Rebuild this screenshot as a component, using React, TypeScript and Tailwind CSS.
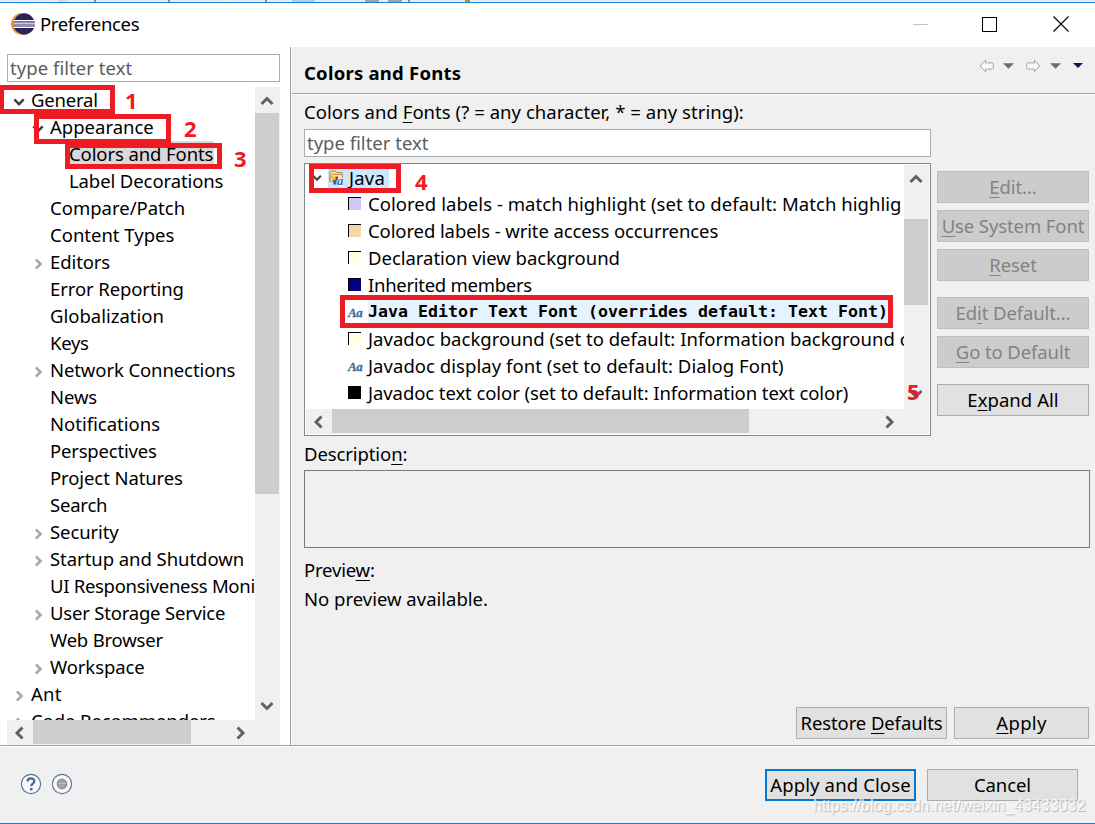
import React from 'react';

interface TreeItem {
    label: string;
    level: number;
    state?: 'open' | 'closed';
    selected?: boolean;
    tracking?: string;
}

interface FontItem {
    label: string;
    swatch?: string;
    selected?: boolean;
    tracking?: string;
}

const pages: TreeItem[] = [
    { label: 'General', level: 0, state: 'open', tracking: 'tracking-[-0.2px]' },
    { label: 'Appearance', level: 1, state: 'open', tracking: 'tracking-normal' },
    { label: 'Colors and Fonts', level: 2, selected: true },
    { label: 'Label Decorations', level: 2 },
    { label: 'Compare/Patch', level: 1, tracking: 'tracking-normal' },
    { label: 'Content Types', level: 1, tracking: 'tracking-normal' },
    { label: 'Editors', level: 1, state: 'closed' },
    { label: 'Error Reporting', level: 1 },
    { label: 'Globalization', level: 1, tracking: 'tracking-normal' },
    { label: 'Keys', level: 1, tracking: 'tracking-[-0.3px]' },
    { label: 'Network Connections', level: 1, state: 'closed' },
    { label: 'News', level: 1 },
    { label: 'Notifications', level: 1, tracking: 'tracking-normal' },
    { label: 'Perspectives', level: 1, tracking: 'tracking-[-0.2px]' },
    { label: 'Project Natures', level: 1 },
    { label: 'Search', level: 1, tracking: 'tracking-[-0.2px]' },
    { label: 'Security', level: 1, state: 'closed' },
    { label: 'Startup and Shutdown', level: 1, state: 'closed', tracking: 'tracking-[-0.05px]' },
    { label: 'UI Responsiveness Monitoring', level: 1, tracking: 'tracking-[-0.3px]' },
    { label: 'User Storage Service', level: 1, state: 'closed', tracking: 'tracking-[-0.2px]' },
    { label: 'Web Browser', level: 1, tracking: 'tracking-[-0.2px]' },
    { label: 'Workspace', level: 1, state: 'closed' },
    { label: 'Ant', level: 0, state: 'closed', tracking: 'tracking-[0.3px]' },
    { label: 'Code Recommenders', level: 0, state: 'closed' },
];

const fonts: FontItem[] = [
    {
        label: 'Colored labels - match highlight (set to default: Match highlig',
        swatch: 'bg-[#cdc8f5]',
        tracking: 'tracking-[0.05px]',
    },
    { label: 'Colored labels - write access occurrences', swatch: 'bg-[#f0d8a8]' },
    { label: 'Declaration view background', swatch: 'bg-[#ffffe1]', tracking: 'tracking-[-0.03px]' },
    { label: 'Inherited members', swatch: 'bg-[#000080]', tracking: 'tracking-[-0.28px]' },
    { label: 'Java Editor Text Font (overrides default: Text Font)', selected: true },
    {
        label: 'Javadoc background (set to default: Information background color)',
        swatch: 'bg-[#ffffe1]',
        tracking: 'tracking-[0.03px]',
    },
    { label: 'Javadoc display font (set to default: Dialog Font)', tracking: 'tracking-[0.05px]' },
    {
        label: 'Javadoc text color (set to default: Information text color)',
        swatch: 'bg-black',
        tracking: 'tracking-[-0.08px]',
    },
];

const indents = ['pl-[5px]', 'pl-[24px]', 'pl-[43px]'];

function Chevron({ dir, className }: { dir: 'up' | 'down' | 'left' | 'right'; className?: string }) {
    const paths = {
        up: 'M1.5 9 L7 3.5 L12.5 9',
        down: 'M1.5 4 L7 9.5 L12.5 4',
        left: 'M9.5 1.5 L4 7 L9.5 12.5',
        right: 'M4.5 1.5 L10 7 L4.5 12.5',
    };
    return (
        <svg viewBox="0 0 14 14" className={className ?? 'w-3.5 h-3.5 text-[#606060]'}>
            <path d={paths[dir]} fill="none" stroke="currentColor" strokeWidth="2.9" />
        </svg>
    );
}

function EclipseLogo() {
    return (
        <svg viewBox="0 0 24 22" className="w-6 h-[22px]">
            <circle cx="11" cy="11" r="11" fill="#f7941e" />
            <circle cx="13" cy="11" r="11" fill="#fff" />
            <circle cx="13" cy="11" r="10.7" fill="#2c2255" />
            <path d="M3 7.6h20.4M2.4 10.9h21.4M3 14.2h20.4" stroke="#fff" strokeWidth="1.4" />
            <path d="M3 9.2h20M3 12.6h20" stroke="#8f8bb5" strokeWidth="1.6" />
        </svg>
    );
}

function FolderIcon() {
    return (
        <svg viewBox="0 0 16 16" className="w-4 h-4">
            <path d="M.8 11.5V2L1.8 1h4.4l1.3 1.5H13V5" fill="#f3d79b" stroke="#b98b3c" />
            <path d="M.8 11.5L3 4.5h10.5v7z" fill="#fae6b4" stroke="#c49a50" />
            <rect x="3.2" y="6.5" width="3.4" height="4" fill="#e8c000" />
            <rect x="6.6" y="6.5" width="2.4" height="4" fill="#a8322c" />
            <rect x="4.2" y="10" width="4.2" height="4.5" fill="#3b5fa5" />
            <text x="8" y="15" fontSize="13" fontWeight="bold" fontStyle="italic" fill="#2f6da6" stroke="#fff" strokeWidth="1.5" paintOrder="stroke" className="font-['Liberation_Serif',serif]">a</text>
        </svg>
    );
}

function FontIcon() {
    return (
        <span className="w-4 text-[13px] font-bold italic leading-none tracking-[-0.5px] text-[#3a6f9f] [-webkit-text-stroke:0.3px_#3a6f9f] font-['Liberation_Serif',serif]">
            Aa
        </span>
    );
}

function HistoryArrow({ flip }: { flip?: boolean }) {
    return (
        <svg viewBox="0 0 16 14" className={flip ? 'w-4 h-3.5 -scale-x-100' : 'w-4 h-3.5'}>
            <path
                d="M1.2 7L6.5 1.2V3.9H13a1.3 1.3 0 0 1 1.3 1.3v3.6a1.3 1.3 0 0 1-1.3 1.3H6.5v2.7z"
                fill="#f8f8f8"
                stroke="#a6a6a6"
            />
        </svg>
    );
}

function Triangle({ className }: { className: string }) {
    return (
        <svg viewBox="0 0 12 6" className={className}>
            <path d="M0 0h12L6 6z" fill="currentColor" />
        </svg>
    );
}

// "&" marks the mnemonic letter, as in native dialog labels
function Label({ text }: { text: string }) {
    const at = text.indexOf('&');
    if (at < 0) return <span>{text}</span>;
    return (
        <span>
            {text.slice(0, at)}
            <span className="underline decoration-1 underline-offset-[3px]">{text[at + 1]}</span>
            {text.slice(at + 2)}
        </span>
    );
}

function Button({ text, disabled, className }: { text: string; disabled?: boolean; className: string }) {
    const tone = disabled
        ? 'border border-[#bfbfbf] bg-[#cccccc] text-[#838383]'
        : 'border border-[#adadad] bg-[#e1e1e1]';
    return (
        <button className={`flex h-8 items-center justify-center whitespace-nowrap ${tone} ${className}`}>
            <Label text={text} />
        </button>
    );
}

function PageTree() {
    return (
        <div className="mt-[5px] ml-[7px] w-[273px]">
            <div className="flex h-[633px]">
                <div className="w-[248px] overflow-hidden">
                    {pages.map((item) => (
                        <div
                            key={item.label}
                            className={`flex h-[27px] items-center whitespace-nowrap ${indents[item.level]}`}
                        >
                            <span className="w-[18px] shrink-0 pt-0.5">
                                {item.state === 'open' && (
                                    <Chevron dir="down" className="ml-px w-3 h-3 text-[#404040]" />
                                )}
                                {item.state === 'closed' && (
                                    <Chevron dir="right" className="ml-px w-3 h-3 text-[#a6a6a6]" />
                                )}
                            </span>
                            <span className={`h-[27px] leading-[26px] px-px ${item.tracking ?? ''} ${item.selected ? 'bg-[#d9d9d9]' : ''}`}>
                                {item.label}
                            </span>
                        </div>
                    ))}
                </div>
                <div className="flex w-[25px] flex-col items-center bg-[#f0f0f0] pr-px">
                    <div className="flex h-[26px] items-center pt-1"><Chevron dir="up" /></div>
                    <div className="h-[381px] w-6 self-start bg-[#cdcdcd]" />
                    <div className="mt-auto flex h-7 items-center"><Chevron dir="down" /></div>
                </div>
            </div>
            <div className="flex h-[25px] items-center bg-[#f0f0f0]">
                <div className="flex w-[26px] justify-center"><Chevron dir="left" /></div>
                <div className="h-6 w-[158px] self-start bg-[#cdcdcd]" />
                <Chevron dir="right" className="ml-[42px] w-3.5 h-3.5 text-[#606060]" />
            </div>
        </div>
    );
}

function FontTree() {
    return (
        <div className="h-[273px] w-[627px] border border-[#828790] bg-white p-px">
            <div className="flex h-[244px]">
                <div className="w-[598px] overflow-hidden whitespace-nowrap">
                    <div className="flex h-[25px] items-center pl-1.5">
                        <Chevron dir="down" className="mr-1.5 w-2.5 h-2.5 text-[#404040]" />
                        <span className="flex h-[27px] items-center gap-1 bg-[#cce8ff] pl-px pr-1">
                            <FolderIcon />
                            <span className="leading-[26px] tracking-[0.2px]">Java</span>
                        </span>
                    </div>
                    {fonts.map((item) => (
                        <div key={item.label} className="flex h-[27px] items-center pl-[42px]">
                            {item.swatch ? (
                                <span className={`mr-[7px] h-[13px] w-[13px] shrink-0 border-t border-l border-black ${item.swatch}`} />
                            ) : (
                                <span className="flex w-5 shrink-0 pt-0.5"><FontIcon /></span>
                            )}
                            {item.selected ? (
                                <span className="h-[27px] bg-[#e5f3ff] text-[16.61px] font-bold leading-[27px] tracking-normal font-['DejaVu_Sans_Mono',monospace]">
                                    {item.label}
                                </span>
                            ) : (
                                <span className={`leading-[26px] ${item.tracking ?? ''}`}>{item.label}</span>
                            )}
                        </div>
                    ))}
                </div>
                <div className="flex w-[25px] flex-col items-center bg-[#f0f0f0] pr-px">
                    <div className="flex h-[54px] items-start pt-2"><Chevron dir="up" /></div>
                    <div className="h-[86px] w-6 self-start bg-[#cdcdcd]" />
                    <div className="mt-auto pb-2"><Chevron dir="down" /></div>
                </div>
            </div>
            <div className="flex h-[25px] items-center bg-[#f0f0f0]">
                <div className="flex w-[26px] justify-center"><Chevron dir="left" /></div>
                <div className="h-6 w-[417px] self-start bg-[#cdcdcd]" />
                <Chevron dir="right" className="ml-[133px] w-3.5 h-3.5 text-[#606060]" />
            </div>
        </div>
    );
}

function Callouts() {
    const frame = 'absolute border-[5px] border-[#ed1c24]';
    const digit = 'absolute text-[22px] font-bold leading-none text-[#ed1c24]';
    return (
        <div className="pointer-events-none">
            <div className={`${frame} -left-px top-[85px] h-[29px] w-[116px]`} />
            <div className={`${frame} left-[34px] top-[114px] h-[30px] w-[137px]`} />
            <div className={`${frame} left-[65px] top-[143px] h-[26px] w-[157px]`} />
            <div className={`${frame} left-[309px] top-[164px] h-[29px] w-[92px]`} />
            <div className={`${frame} left-[340px] top-[295px] h-[33px] w-[553px]`} />
            <span className={`${digit} left-[125px] top-[89px]`}>1</span>
            <span className={`${digit} left-[184px] top-[117px]`}>2</span>
            <span className={`${digit} left-[234px] top-[147px]`}>3</span>
            <span className={`${digit} left-[415px] top-[170px]`}>4</span>
            <span className={`${digit} left-[907px] top-[380px]`}>5</span>
            <span className="absolute left-[813px] top-[795px] whitespace-nowrap text-[16.1px] leading-5 tracking-[-0.04px] text-white/80 [text-shadow:1px_1px_1px_#b4b4b4] font-['Liberation_Sans',sans-serif]">
                https://blog.csdn.net/weixin_43433032
            </span>
        </div>
    );
}

export default function App() {
    return (
        <div className="relative flex h-[824px] w-[1095px] flex-col overflow-hidden border-b border-[#1883d7] bg-[#f0f0f0] text-[18.5px] leading-6 text-black tracking-[-0.1px] font-['Noto_Sans','Open_Sans',sans-serif]">
            <div className="flex h-[3px] shrink-0 border-b border-[#1883d7] bg-[#e6ecfa]">
                <div className="ml-[58px] w-[9px] bg-[#f3cfd8]" />
                <div className="ml-[27px] w-0.5 bg-[#8d8d85]" />
                <div className="ml-[72px] w-0.5 bg-[#8d8d85]" />
                <div className="ml-[52px] w-1.5 bg-[#f8f1c4]" />
                <div className="ml-[37px] w-0.5 bg-[#8d8d85]" />
                <div className="ml-[25px] w-[23px] bg-[#a6d2fb]" />
                <div className="ml-[50px] w-3.5 bg-[#a0a4a4]" />
                <div className="ml-[9px] w-3.5 bg-[#a0a4a4]" />
                <div className="ml-1.5 w-0.5 bg-[#8d8d85]" />
                <div className="ml-[55px] w-[5px] bg-[#c58b20]" />
            </div>

            <div className="flex h-11 shrink-0 items-center bg-white pl-[11px]">
                <div className="-mt-0.5"><EclipseLogo /></div>
                <span className="ml-[5px] -mt-0.5 tracking-[-0.35px]">Preferences</span>
                <div className="ml-auto -mt-0.5 flex items-center pr-[26px]">
                    <div className="h-px w-[15px] bg-[#c4c4c4]" />
                    <div className="ml-[54px] h-[15px] w-[15px] border border-black" />
                    <svg viewBox="0 0 16 16" className="ml-14 w-4 h-4">
                        <path d="M.5.5l15 15M15.5.5l-15 15" stroke="#000" strokeWidth="1.1" />
                    </svg>
                </div>
            </div>

            <div className="flex h-[698px] shrink-0">
                <div className="w-[290px] shrink-0 bg-white pt-[7px]">
                    <div className="ml-[7px] h-7 w-[273px] border border-[#abadb3] pl-0.5 leading-[25px] tracking-[0.05px] text-[#5c5c5c]">
                        type filter text
                    </div>
                    <PageTree />
                </div>
                <div className="w-0.5 shrink-0 border-l border-r border-l-[#a0a0a0] border-r-white" />

                <div className="flex w-[803px] flex-col">
                    <div className="flex h-12 shrink-0 items-center border-b border-white pl-3 shadow-[inset_0_-1px_0_#a0a0a0]">
                        <h1 className="mt-1 text-[18.5px] font-bold tracking-[0.23px]">Colors and Fonts</h1>
                        <div className="ml-auto mb-2.5 flex items-center pr-3">
                            <HistoryArrow />
                            <Triangle className="ml-2 w-[11px] h-1.5 text-[#6d6d6d]" />
                            <div className="ml-[11px]"><HistoryArrow flip /></div>
                            <Triangle className="ml-[9px] w-[11px] h-1.5 text-[#6d6d6d]" />
                            <Triangle className="ml-3 w-2.5 h-[5px] text-[#2b0a4a]" />
                        </div>
                    </div>

                    <div className="pl-3 pt-[5px]">
                        <div className="h-[29px] leading-6 tracking-[0.05px]">
                            <Label text="Colors and &Fonts (? = any character, * = any string):" />
                        </div>
                        <div className="h-7 w-[627px] border border-[#abadb3] bg-white pl-0.5 leading-[25px] tracking-normal text-[#5c5c5c]">
                            type filter text
                        </div>
                        <div className="mt-[6px] flex gap-1.5">
                            <FontTree />
                            <div className="flex flex-col pt-2">
                                <Button text="&Edit..." disabled className="w-[152px]" />
                                <Button text="&Use System Font" disabled className="mt-[7px] w-[152px]" />
                                <Button text="&Reset" disabled className="mt-[7px] w-[152px]" />
                                <Button text="Ed&it Default..." disabled className="mt-4 w-[152px]" />
                                <Button text="&Go to Default" disabled className="mt-[7px] w-[152px]" />
                                <Button text="E&xpand All" className="mt-4 w-[152px] tracking-[0.05px]" />
                            </div>
                        </div>
                        <div className="mt-[6px] h-[28px]"><Label text="Descriptio&n:" /></div>
                        <div className="h-[78px] w-[786px] border border-[#7a7a7a]" />
                        <div className="mt-[10px] tracking-[-0.2px]"><Label text="Previe&w:" /></div>
                        <div className="mt-[5px] tracking-normal">No preview available.</div>
                        <div className="mt-[96px] flex gap-[7px] pl-[492px]">
                            <Button text="Restore &Defaults" className="w-[151px]" />
                            <Button text="&Apply" className="w-[135px] tracking-[0.3px]" />
                        </div>
                    </div>
                </div>
            </div>

            <div className="flex grow items-center border-t border-[#a0a0a0] pl-5 shadow-[inset_0_1px_0_#fff]">
                <svg viewBox="0 0 22 22" className="-mt-0.5 w-[22px] h-[22px]">
                    <circle cx="11" cy="11" r="9.6" fill="#f6f8fb" stroke="#5a6e94" strokeWidth="1.1" />
                    <path d="M7.6 8.6C7.6 4.3 14.4 4.5 14.3 8.2c0 2.3-3.1 2.5-3.1 5" fill="none" stroke="#4d658f" strokeWidth="2.2" />
                    <path d="M10 15h2.5v2.4H10z" fill="#4d658f" />
                </svg>
                <svg viewBox="0 0 22 22" className="ml-[9px] -mt-0.5 w-[22px] h-[22px]">
                    <circle cx="11" cy="11" r="9.6" fill="#f6f8fb" stroke="#5a6e94" strokeWidth="1.1" />
                    <circle cx="11" cy="11" r="4.8" fill="#a3a3a3" stroke="#7d7d7d" />
                    <path d="M7 10.5h8" stroke="#c4c4c4" />
                </svg>
                <div className="ml-auto flex gap-[11px] pr-[17px]">
                    <button className="h-8 w-[151px] whitespace-nowrap border-2 border-[#0078d7] bg-[#e1e1e1] leading-7 tracking-[0.13px]">
                        Apply and Close
                    </button>
                    <Button text="Cancel" className="w-[151px]" />
                </div>
            </div>

            <Callouts />
        </div>
    );
}
